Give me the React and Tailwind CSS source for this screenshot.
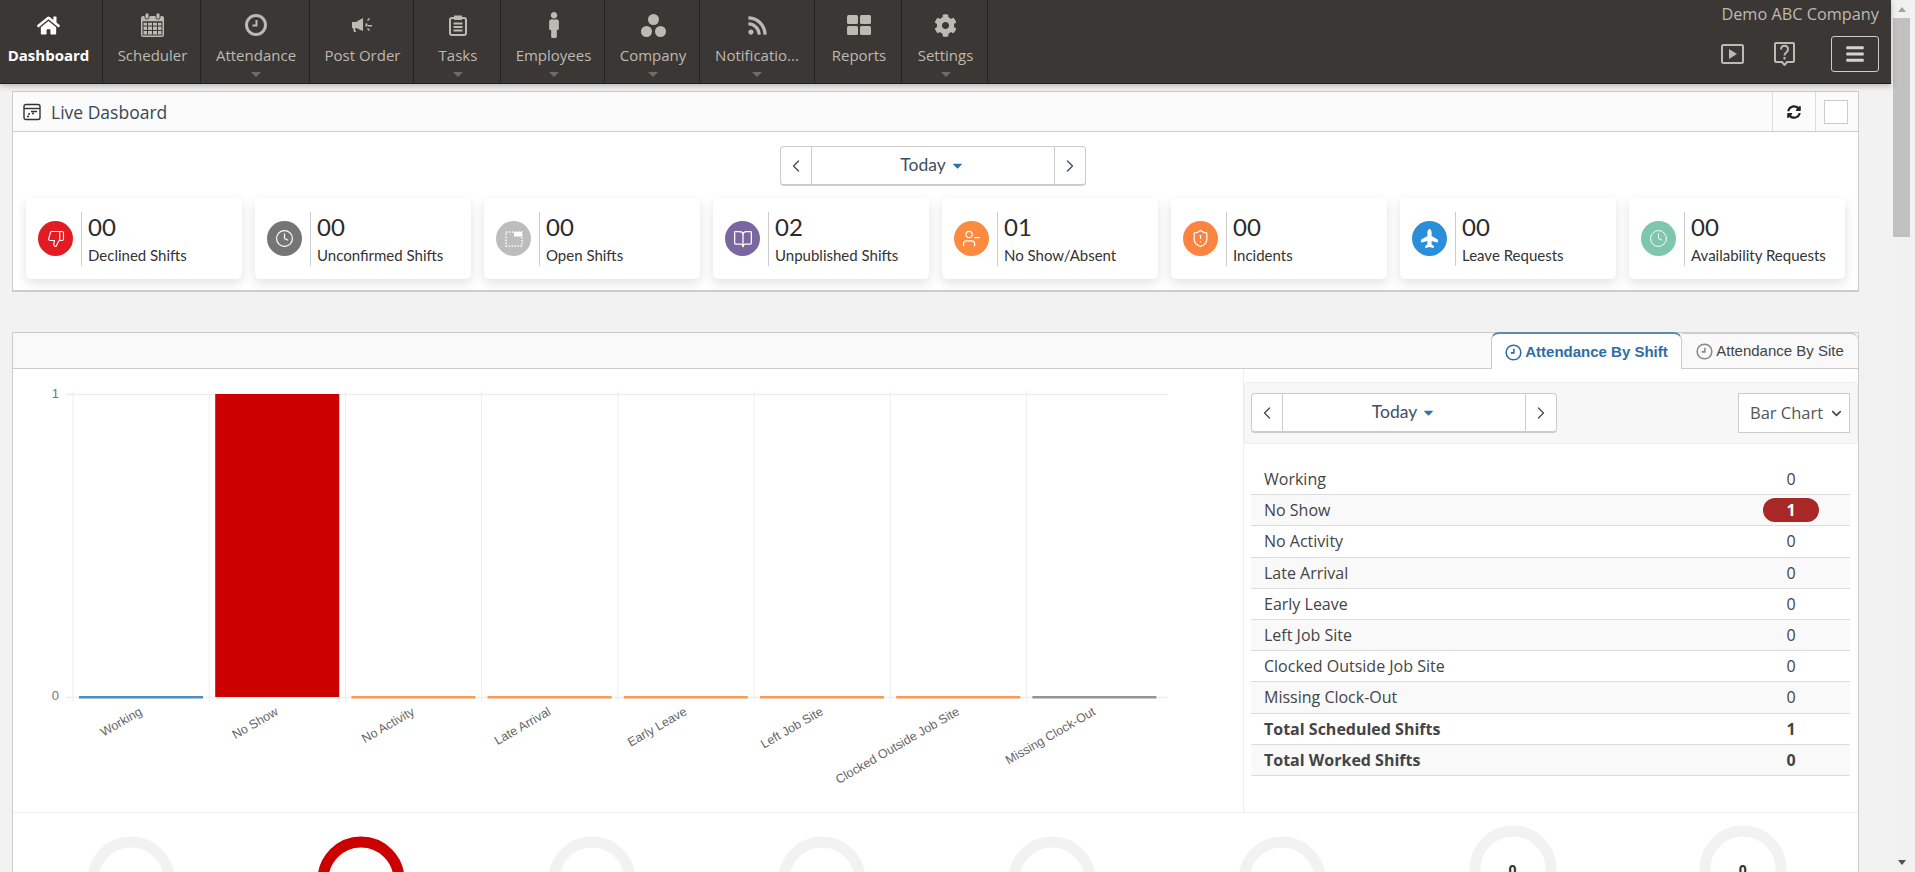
import React from 'react';
import { FaHome, FaMale, FaRss, FaCog, FaBars, FaSyncAlt, FaPlane, FaCaretDown } from 'react-icons/fa';
import { ChevronLeft, ChevronRight, ChevronDown, ThumbsDown, Clock, BookOpen, UserMinus, ShieldAlert } from 'lucide-react';

const CalendarIcon = () => (
  <svg width="23" height="24" viewBox="0 0 23 24" fill="currentColor">
    <rect x="0" y="3" width="23" height="21" rx="2" />
    <rect x="4" y="0" width="4" height="6" rx="1.5" stroke="#3b3734" strokeWidth="1" />
    <rect x="15" y="0" width="4" height="6" rx="1.5" stroke="#3b3734" strokeWidth="1" />
    <path d="M2 9h19M2 13h19M2 17.500h19M6.500 9v12.500M11.500 9v12.500M16.500 9v12.500" stroke="#3b3734" strokeWidth="1" />
    <rect x="2" y="9" width="19" height="13" fill="none" stroke="#3b3734" strokeWidth="1" />
  </svg>
);

const TimeIcon = ({ size = 22, stroke = 3 }) => (
  <svg width={size} height={size} viewBox="0 0 22 22" fill="none" stroke="currentColor">
    <circle cx="11" cy="11" r="9.500" strokeWidth={stroke} />
    <path d="M11.500 6v5.500H7.500" strokeWidth="2" />
  </svg>
);

const MegaphoneIcon = () => (
  <svg width="21" height="17" viewBox="0 0 21 17" fill="currentColor">
    <path d="M0 5h4l7-4v13l-7-3H3l1 4H2L1 11H0z" />
    <path d="M13.500 6.500h2v3h-2zM15 3l2-2 1 1-2 2zM16 8h4v1.500h-4zM15 12l1-1 2 2-1 1z" />
  </svg>
);

const ClipboardIcon = () => (
  <svg width="20" height="21" viewBox="0 0 20 21" fill="none" stroke="currentColor">
    <rect x="2" y="3" width="16" height="17" rx="2" strokeWidth="2" />
    <rect x="6.500" y="1" width="7" height="3.500" fill="currentColor" strokeWidth="1" />
    <path d="M5.500 8.500h9M5.500 12h9M5.500 15.500h9" strokeWidth="1.800" />
  </svg>
);

const CompanyIcon = () => (
  <svg width="25" height="23" viewBox="0 0 25 23" fill="currentColor">
    <circle cx="12.500" cy="5.500" r="5.500" />
    <circle cx="5.500" cy="17.500" r="5.500" />
    <circle cx="19.500" cy="17.500" r="5.500" />
  </svg>
);

const ReportsIcon = () => (
  <svg width="24" height="20" viewBox="0 0 24 20" fill="currentColor">
    <rect x="0" y="0" width="11" height="9" rx="1.500" />
    <rect x="13" y="0" width="11" height="9" rx="1.500" />
    <rect x="0" y="11" width="11" height="9" rx="1.500" />
    <rect x="13" y="11" width="11" height="9" rx="1.500" />
  </svg>
);

const PlayBoxIcon = () => (
  <svg width="23" height="20" viewBox="0 0 23 20" fill="none" stroke="currentColor">
    <rect x="1" y="1" width="21" height="18" rx="1.500" strokeWidth="2" />
    <path d="M8 5l8 5-8 5z" fill="currentColor" stroke="none" />
  </svg>
);

const HelpIcon = () => (
  <svg width="21" height="24" viewBox="0 0 21 24" fill="none" stroke="currentColor">
    <path d="M2 1h17a1 1 0 0 1 1 1v17a1 1 0 0 1-1 1h-6l-2.500 3-2.500-3H2a1 1 0 0 1-1-1V2a1 1 0 0 1 1-1z" strokeWidth="2" />
    <path d="M7 7.500c0-5 7-5 7 0 0 3-3.500 3-3.500 6" strokeWidth="2" />
    <path d="M10.500 15v2.500" strokeWidth="2" />
  </svg>
);

const LiveIcon = () => (
  <svg width="18" height="18" viewBox="0 0 18 18" fill="none" stroke="#333">
    <rect x="1" y="1.500" width="16" height="15" rx="2" strokeWidth="1.400" />
    <path d="M1 5.500h16" strokeWidth="1.400" />
    <path d="M8 8.500h6M5 11h2M4 13.500h2M9 10.500h2" strokeWidth="1.500" />
  </svg>
);

const OpenShiftIcon = () => (
  <svg width="20" height="20" viewBox="0 0 20 20" fill="none" stroke="#fff">
    <rect x="2" y="3" width="16" height="14" strokeWidth="1.500" strokeDasharray="1.500 1.500" />
    <rect x="10" y="3" width="8" height="4.500" fill="#fff" stroke="none" />
  </svg>
);

const navItems = [
  { label: 'Dashboard', width: 'w-[103px] pr-[5px]', icon: <FaHome size={23} />, active: true },
  { label: 'Scheduler', width: 'w-[98px] pl-[2px]', icon: <CalendarIcon /> },
  { label: 'Attendance', width: 'w-[109px] pl-[2px]', icon: <TimeIcon />, caret: true },
  { label: 'Post Order', width: 'w-[104px] pl-[2px]', icon: <MegaphoneIcon /> },
  { label: 'Tasks', width: 'w-[87px] pl-[2px]', icon: <ClipboardIcon />, caret: true },
  { label: 'Employees', width: 'w-[104px] pl-[2px]', icon: <FaMale size={26} />, caret: true },
  { label: 'Company', width: 'w-[95px] pl-[2px]', icon: <CompanyIcon />, caret: true },
  { label: 'Notificatio...', width: 'w-[115px]', icon: <FaRss size={21} />, caret: true },
  { label: 'Reports', width: 'w-[87px] pl-[2px]', icon: <ReportsIcon /> },
  { label: 'Settings', width: 'w-[86px] pl-[2px]', icon: <FaCog size={23} />, caret: true },
];

const cards = [
  { value: '00', label: 'Declined Shifts', color: 'bg-[#e31b23]', icon: <ThumbsDown size={18} strokeWidth={1.5} /> },
  { value: '00', label: 'Unconfirmed Shifts', color: 'bg-[#757575]', icon: <Clock size={19} strokeWidth={1.5} /> },
  { value: '00', label: 'Open Shifts', color: 'bg-[#bdbdbd]', icon: <OpenShiftIcon /> },
  { value: '02', label: 'Unpublished Shifts', color: 'bg-[#7a679f]', icon: <BookOpen size={20} strokeWidth={1.5} /> },
  { value: '01', label: 'No Show/Absent', color: 'bg-[#fb8b3f]', icon: <UserMinus size={19} strokeWidth={1.5} /> },
  { value: '00', label: 'Incidents', color: 'bg-[#fb8441]', icon: <ShieldAlert size={19} strokeWidth={1.5} /> },
  { value: '00', label: 'Leave Requests', color: 'bg-[#2a8fd8]', icon: <FaPlane size={19} className="-rotate-90" /> },
  { value: '00', label: 'Availability Requests', color: 'bg-[#7ec6ad]', icon: <Clock size={19} strokeWidth={1.2} /> },
];

const rows = [
  { label: 'Working', value: '0' },
  { label: 'No Show', value: '1', badge: true },
  { label: 'No Activity', value: '0' },
  { label: 'Late Arrival', value: '0' },
  { label: 'Early Leave', value: '0' },
  { label: 'Left Job Site', value: '0' },
  { label: 'Clocked Outside Job Site', value: '0' },
  { label: 'Missing Clock-Out', value: '0' },
  { label: 'Total Scheduled Shifts', value: '1', bold: true },
  { label: 'Total Worked Shifts', value: '0', bold: true },
];

const bars = [
  { label: 'Working', color: '#4f8cc4' },
  { label: 'No Show', color: '#cc0000', full: true },
  { label: 'No Activity', color: '#f79a5b' },
  { label: 'Late Arrival', color: '#f79a5b' },
  { label: 'Early Leave', color: '#f79a5b' },
  { label: 'Left Job Site', color: '#f79a5b' },
  { label: 'Clocked Outside Job Site', color: '#f79a5b' },
  { label: 'Missing Clock-Out', color: '#949494' },
];

const gauges = [
  { color: '#f2f2f2' },
  { color: '#cc0000' },
  { color: '#f2f2f2' },
  { color: '#f2f2f2' },
  { color: '#f2f2f2' },
  { color: '#f2f2f2' },
  { color: '#f2f2f2', raised: true, value: '0' },
  { color: '#f2f2f2', raised: true, value: '0' },
];

const DateNav = () => (
  <div className="flex h-[40px] w-[306px] rounded-[4px] border border-b-2 border-[#ccc] bg-white font-['Lato'] text-[#3f4f5f]">
    <div className="flex w-[31px] items-center justify-center border-r border-[#ccc]">
      <ChevronLeft size={20} strokeWidth={1.6} />
    </div>
    <div className="flex flex-1 items-center justify-center gap-1 text-[17.500px]">
      Today
      <FaCaretDown size={15} className="text-[#2e74b5]" />
    </div>
    <div className="flex w-[31px] items-center justify-center border-l border-[#ccc]">
      <ChevronRight size={20} strokeWidth={1.6} />
    </div>
  </div>
);

const Chart = () => (
  <svg width="1230" height="444" viewBox="13 369 1230 444" className="shrink-0">
    <path d="M66 394.500H1168M66 697.500H1168" stroke="#eee" strokeWidth="1.500" />
    {bars.map((bar, i) => {
      const x = 73 + i * 136.200;
      return (
        <g key={bar.label}>
          <path d={`M${x} 391V702`} stroke="#eee" strokeWidth="1" />
          <rect
            x={x + 6}
            y={bar.full ? 394 : 696}
            width="124"
            height={bar.full ? 303 : 2.500}
            fill={bar.color}
          />
          <text
            x={x + 70}
            y={714}
            textAnchor="end"
            fontFamily="Liberation Sans"
            fontSize="12.500"
            fill="#666"
            transform={`rotate(-30 ${x + 70} 714)`}
          >
            {bar.label}
          </text>
        </g>
      );
    })}
    <text x="59" y="398" textAnchor="end" fontFamily="Liberation Sans" fontSize="13" fill="#777">1</text>
    <text x="59" y="700" textAnchor="end" fontFamily="Liberation Sans" fontSize="13" fill="#777">0</text>
  </svg>
);

const App = () => {
  return (
    <div className="flex h-[872px] overflow-hidden bg-[#f2f2f2] font-['Open_Sans']">
      <div className="w-[1891px] shrink-0">
        {/* top nav */}
        <div className="relative z-10 flex h-[84px] justify-between border-b border-[#1f1d1b] bg-[#3b3734] shadow-[0_2px_6px_rgba(0,0,0,0.25)]">
          <div className="flex">
            {navItems.map((item) => (
              <div
                key={item.label}
                className={`flex ${item.width} flex-col items-center border-r border-[#222] pt-[12px] ${item.active ? 'text-white' : 'text-[#bdb9b3]'}`}
              >
                <div className="flex h-[26px] items-center justify-center">{item.icon}</div>
                <div className={`mt-[7px] h-[20px] whitespace-nowrap text-[15px] leading-[20px] ${item.active ? 'font-bold' : ''}`}>{item.label}</div>
                {item.caret && (
                  <div className="mt-[7px] h-0 w-0 border-x-[5px] border-t-[5px] border-x-transparent border-t-[#706c68]" />
                )}
              </div>
            ))}
          </div>
          <div className="flex flex-col items-end pr-[12px] pt-[3px] text-[#bdb9b3]">
            <div className="text-[16.300px] leading-[22px]">Demo ABC Company</div>
            <div className="mt-[11px] flex items-center">
              <PlayBoxIcon />
              <div className="ml-[30px] mr-[36px]"><HelpIcon /></div>
              <div className="flex h-[36px] w-[48px] items-center justify-center rounded-[3px] border border-[#ccc] text-[#d5d3d0]">
                <FaBars size={20} />
              </div>
            </div>
          </div>
        </div>

        {/* live dashboard panel */}
        <div className="ml-[12px] mt-[7px] w-[1847px] border border-b-2 border-[#ccc] bg-white">
          <div className="flex h-[40px] items-center justify-between border-b border-[#ccc] bg-[#fbfbfb]">
            <div className="flex items-center gap-[10px] pl-[10px]">
              <LiveIcon />
              <span className="pt-[2px] text-[17.500px] text-[#3a4654]">Live Dasboard</span>
            </div>
            <div className="flex h-full">
              <div className="flex w-[43px] items-center justify-center border-l border-[#ddd] text-[#222]">
                <FaSyncAlt size={14} />
              </div>
              <div className="flex w-[43px] items-center justify-start border-l border-[#ddd] pl-[8px]">
                <div className="h-[24px] w-[24px] border border-[#ccc] bg-white" />
              </div>
            </div>
          </div>
          <div className="flex justify-center pr-[6px] pt-[14px]">
            <DateNav />
          </div>
          <div className="mb-[11px] mt-[12px] grid grid-cols-8 gap-[13px] pl-[13px] pr-[13px] font-['Lato']">
            {cards.map((card) => (
              <div key={card.label} className="flex h-[81px] items-center rounded-[5px] bg-white pl-[12px] shadow-[0_4px_12px_rgba(0,0,0,0.12)]">
                <div className={`flex h-[35px] w-[35px] shrink-0 items-center justify-center rounded-full text-white ${card.color}`}>
                  {card.icon}
                </div>
                <div className="ml-[8px] h-[54px] border-l border-[#ccc] pl-[6px]">
                  <div className="-mt-[1px] text-[24px] leading-[32px] text-[#2b2b2b]">{card.value}</div>
                  <div className="mt-[2px] whitespace-nowrap text-[15px] leading-[20px] text-[#333]">{card.label}</div>
                </div>
              </div>
            ))}
          </div>
        </div>

        {/* attendance panel */}
        <div className="ml-[12px] mt-[40px] w-[1847px] border border-b-0 border-[#ccc] bg-white">
          <div className="flex h-[36px] items-end justify-end border-b border-[#ccc] bg-[#f9f9f9] font-['Liberation_Sans'] text-[15px]">
            <div className="-mb-px flex h-[37px] w-[191px] items-center justify-center gap-[3px] rounded-t-[8px] border border-b-0 border-[#ccc] border-t-2 border-t-[#5b8bb5] bg-white pt-[2px] font-bold text-[#2e6da4]">
              <TimeIcon size={17} stroke={2} />
              Attendance By Shift
            </div>
            <div className="flex h-[36px] w-[176px] items-center justify-center gap-[3px] rounded-tr-[8px] border-t-2 border-[#ccc] bg-[#f9f9f9] pt-[1px] text-[#444]">
              <span className="text-[#888]"><TimeIcon size={17} stroke={2} /></span>
              Attendance By Site
            </div>
          </div>
          <div className="flex h-[444px] border-b border-[#eee]">
            <Chart />
            <div className="flex-1 border-l border-[#eee]">
              <div className="mt-[13px] flex h-[62px] items-center justify-between rounded-[3px] border border-[#eee] bg-[#f7f7f7] pl-[6px] pr-[7px]">
                <DateNav />
                <div className="flex h-[40px] w-[112px] items-center justify-between border border-[#ccc] bg-white pl-[11px] pr-[5px] text-[16.500px] text-[#555]">
                  Bar Chart
                  <ChevronDown size={15} strokeWidth={2.5} className="text-[#444]" />
                </div>
              </div>
              <div className="ml-[7px] mr-[8px] mt-[20px] text-[16px] text-[#444]">
                {rows.map((row, i) => (
                  <div
                    key={row.label}
                    className={`flex h-[31.200px] items-center border-b border-[#ddd] pl-[13px] ${i % 2 === 1 ? 'bg-[#f9f9f9]' : ''} ${row.bold ? 'font-bold' : ''}`}
                  >
                    <div className="flex-1">{row.label}</div>
                    <div className="flex w-[118px] justify-center">
                      {row.badge ? (
                        <span className="flex h-[24px] w-[56px] items-center justify-center rounded-full bg-[#a82828] font-bold text-white">{row.value}</span>
                      ) : (
                        row.value
                      )}
                    </div>
                  </div>
                ))}
              </div>
            </div>
          </div>
          <div className="grid grid-cols-8 pl-[3px]">
            {gauges.map((gauge, i) => (
              <div key={i} className={`relative flex justify-center ${gauge.raised ? 'pt-[12px]' : 'pt-[23px]'}`}>
                <svg width="88" height="88" viewBox="0 0 88 88" fill="none">
                  <circle cx="44" cy="44" r="38" stroke={gauge.color} strokeWidth="11" />
                </svg>
                {gauge.value && (
                  <span className="absolute left-0 right-0 top-[46px] text-center text-[14px] font-bold text-[#333]">{gauge.value}</span>
                )}
              </div>
            ))}
          </div>
        </div>
      </div>

      {/* scrollbar */}
      <div className="ml-[2px] flex w-[17px] flex-col items-center bg-[#f1f1f1]">
        <div className="mt-[7px] h-0 w-0 border-x-[4px] border-b-[5px] border-x-transparent border-b-[#a3a3a3]" />
        <div className="mt-[6px] h-[219px] w-full bg-[#c1c1c1]" />
        <div className="mt-auto mb-[7px] h-0 w-0 border-x-[4px] border-t-[5px] border-x-transparent border-t-[#505050]" />
      </div>
    </div>
  );
};

export default App;
